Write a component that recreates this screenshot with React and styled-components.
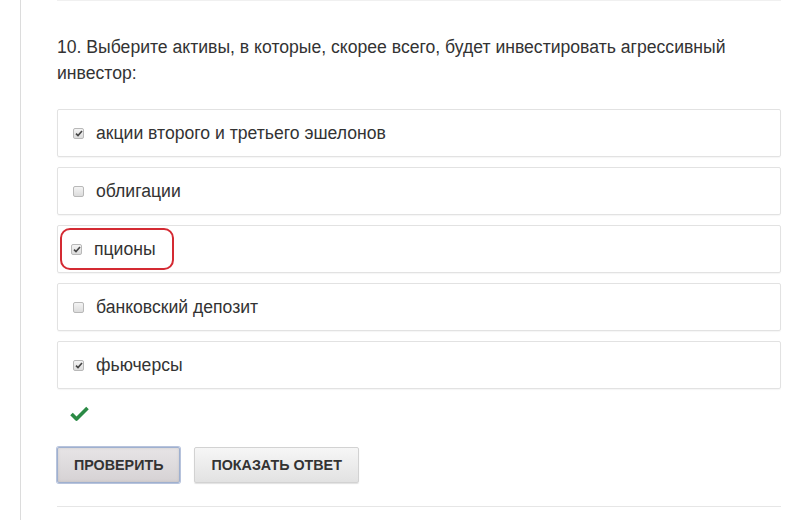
import React from "react";
import styled, { createGlobalStyle } from "styled-components";

const GlobalStyle = createGlobalStyle`
  html, body {
    margin: 0;
    padding: 0;
    background: #fff;
  }
  body {
    font-family: "Liberation Sans", Arial, sans-serif;
    color: #333;
  }
`;

const Page = styled.div`
  height: 520px;
  margin-left: 20px;
  border-left: 1px solid #dcdcdc;
  overflow: hidden;
`;

const Question = styled.section`
  margin: 0 19px 0 36px;
  border-top: 1px solid #f0f0f0;
  padding-top: 33px;
`;

const Title = styled.p`
  margin: 0 0 23px;
  font-size: 17.6px;
  line-height: 26px;
  color: #333;
  padding-right: 40px;
`;

const OptionList = styled.ul`
  list-style: none;
  margin: 0;
  padding: 0;
  display: flex;
  flex-direction: column;
  gap: 10px;
`;

const Option = styled.li`
  height: 46px;
  border: 1px solid #e2e2e2;
  border-radius: 2px;
  box-shadow: 0 1px 1px rgba(0, 0, 0, 0.04);
  display: flex;
  align-items: center;
  padding-left: 13px;
`;

const Label = styled.label`
  display: flex;
  align-items: center;
  gap: 12px;
  height: 38px;
  padding: 0 16px 0 0;
  margin-left: ${({ $marked }) => ($marked ? "-11px" : "0")};
  padding-left: ${({ $marked }) => ($marked ? "9px" : "0")};
  border: 2px solid ${({ $marked }) => ($marked ? "#d42a33" : "transparent")};
  border-radius: 10px;
  font-size: 17.6px;
  color: #333;
`;

const Box = styled.span`
  width: 9px;
  height: 9px;
  border: 1px solid #b8b8b8;
  border-radius: 2px;
  background: linear-gradient(#f4f4f4, #dcdcdc);
  display: flex;
  align-items: center;
  justify-content: center;
`;

const Status = styled.div`
  height: 58px;
  box-sizing: border-box;
  display: flex;
  align-items: flex-start;
  padding: 17px 0 0 13px;
`;

const Buttons = styled.div`
  display: flex;
  gap: 14px;
  padding-bottom: 23px;
  border-bottom: 1px solid #e6e6e6;
`;

const Button = styled.button`
  height: 36px;
  padding: 0 16px;
  font-family: "Liberation Sans", Arial, sans-serif;
  font-size: 14.3px;
  font-weight: bold;
  color: #333;
  border-radius: 2px;
  cursor: pointer;
  border: 1px solid ${({ $active }) => ($active ? "#9fb0cf" : "#d2d2d2")};
  background: ${({ $active }) =>
    $active
      ? "linear-gradient(#e7e4e6, #d6d2d4)"
      : "linear-gradient(#f6f6f6, #e2e2e2)"};
  box-shadow: ${({ $active }) =>
    $active
      ? "0 0 0 1px #b7c3dc, inset 0 0 3px rgba(0,0,0,0.1)"
      : "0 1px 1px rgba(0,0,0,0.12)"};
`;

const Tick = () => (
  <svg width="8" height="7" viewBox="0 0 8 7">
    <path d="M1 3.6 L3 5.6 L7 1" fill="none" stroke="#444" strokeWidth="1.6" />
  </svg>
);

const options = [
  { text: "акции второго и третьего эшелонов", checked: true },
  { text: "облигации", checked: false },
  { text: "пционы", checked: true, marked: true },
  { text: "банковский депозит", checked: false },
  { text: "фьючерсы", checked: true },
];

const App = () => (
  <>
    <GlobalStyle />
    <Page>
      <Question>
        <Title>
          10. Выберите активы, в которые, скорее всего, будет инвестировать
          агрессивный инвестор:
        </Title>
        <OptionList>
          {options.map((o) => (
            <Option key={o.text}>
              <Label $marked={o.marked}>
                <Box>{o.checked && <Tick />}</Box>
                {o.text}
              </Label>
            </Option>
          ))}
        </OptionList>
        <Status>
          <svg width="19" height="15" viewBox="0 0 19 15">
            <path
              d="M1.5 8 L6.5 13 L17.5 2"
              fill="none"
              stroke="#2b8a45"
              strokeWidth="3.6"
              strokeLinejoin="round"
            />
          </svg>
        </Status>
        <Buttons>
          <Button $active>ПРОВЕРИТЬ</Button>
          <Button>ПОКАЗАТЬ ОТВЕТ</Button>
        </Buttons>
      </Question>
    </Page>
  </>
);

export default App;
